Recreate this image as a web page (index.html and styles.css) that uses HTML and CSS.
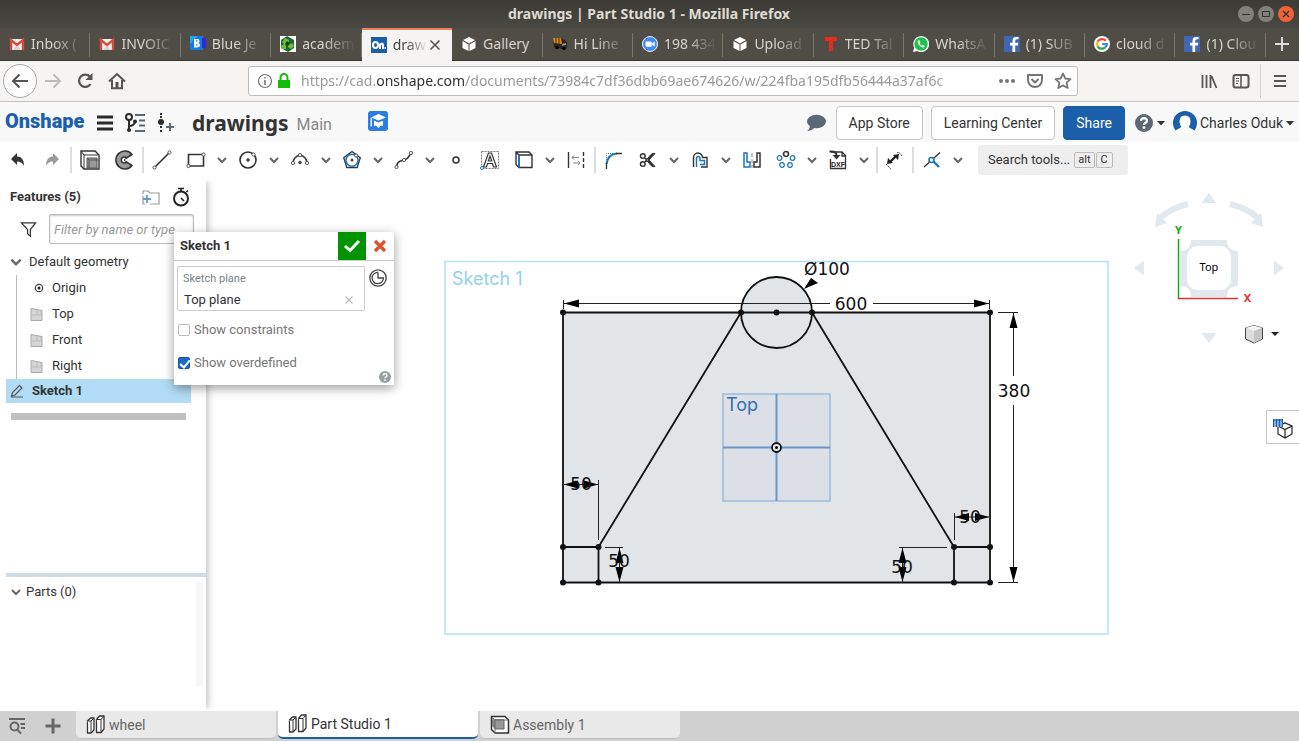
FILE: index.html
```html
<!DOCTYPE html>
<html lang="en">
<head>
<meta charset="utf-8">
<title>drawings | Part Studio 1</title>
<link rel="stylesheet" href="styles.css">
</head>
<body>
<svg class="defs" aria-hidden="true">
  <symbol id="chev" viewBox="0 0 12 12"><path d="M2 4l4 4 4-4" fill="none" stroke="#666" stroke-width="2"/></symbol>
  <symbol id="caret" viewBox="0 0 8 5"><path d="M0 0h8L4 4.5z" fill="#333"/></symbol>
  <symbol id="gmail" viewBox="0 0 16 16"><path d="M1 3h14v11H1z" fill="#eee"/><path d="M4 14l4-5 4 5z" fill="#d5d5d5"/><path d="M2 14V4l6 5 6-5v10" fill="none" stroke="#d54b3d" stroke-width="2.4"/></symbol>
  <symbol id="cube" viewBox="0 0 16 16"><path d="M8 1l6 3-6 3.500L2 4zM1.500 5l6 3.500V15l-6-3zM14.500 5l-6 3.500V15l6-3z" fill="#fff"/></symbol>
  <symbol id="fb" viewBox="0 0 16 16"><path d="M0 0h16v16H0z" fill="#4267b2"/><path d="M14.500 3.300h-1.600q-1.700 0-1.700 1.700v1.800h3.100l-.4 2.600h-2.700V16H8.500V9.400H6V6.800h2.500V4.700Q8.600 1 12.300 1h2.200z" fill="#fff"/></symbol>
  <symbol id="plane" viewBox="0 0 14 14"><path d="M1 1.500l11 2v10H1z" fill="#d5d5d5" stroke="#aaa"/><path d="M7 3v5H2M7 8h4V4" fill="none" stroke="#bbb"/></symbol>
  <symbol id="parts" viewBox="0 0 20 20"><g fill="#fff" stroke="#333" stroke-width="1.300" stroke-linejoin="round"><path d="M1.500 6l3-3H8v12l-3 3H1.500z"/><path d="M1.500 6H5v12M5 6l3-3" stroke-width="1"/><path d="M10.500 4.500l3-3.500H18v13l-3 3.500h-4.500z"/><path d="M10.500 4.500H15v13M15 4.500L18 1" stroke-width="1"/></g></symbol>
  <symbol id="help" viewBox="0 0 18 18"><circle cx="9" cy="9" r="9" fill="currentColor"/><path d="M6 6.800Q6.300 4.200 9 4.200T12 6.800Q12 8.200 10 9.200 9 9.800 9 11" fill="none" stroke="#fff" stroke-width="2.200"/><circle cx="9" cy="13.600" r="1.400" fill="#fff"/></symbol>
</svg>

<header class="titlebar">
  <h1>drawings | Part Studio 1 - Mozilla Firefox</h1>
  <div class="winctl">
    <button aria-label="Minimize"><svg viewBox="0 0 16 16"><path d="M4 8.500h8" stroke="#33322e"/></svg></button>
    <button aria-label="Maximize"><svg viewBox="0 0 16 16"><path d="M4.500 5.500h7v5h-7z" fill="none" stroke="#33322e"/></svg></button>
    <button class="close" aria-label="Close"><svg viewBox="0 0 16 16"><path d="M5 5l6 6M11 5l-6 6" stroke="#33322e" stroke-width="1.300"/></svg></button>
  </div>
</header>

<nav class="browsertabs" aria-label="Browser tabs">
  <button class="btab"><svg><use href="#gmail"/></svg><span>Inbox (</span></button>
  <button class="btab"><svg><use href="#gmail"/></svg><span>INVOIC</span></button>
  <button class="btab"><svg viewBox="0 0 16 16"><path d="M0 0h13v14H0z" fill="#1478e8"/><path d="M0 0h8L0 8z" fill="#20a8ef"/><path d="M12 2h4v10h-4z" fill="#3029d8"/><path d="M4 3h3.500q2 0 2 2t-1.500 2q2 .2 2 2.200T7.500 11.500H4z" fill="#fff"/><path d="M6 4.800h1.500M6 8.800h1.500" stroke="#1478e8" stroke-width="1.300"/></svg><span>Blue Je</span></button>
  <button class="btab"><svg viewBox="0 0 16 16"><path d="M0 0h16v16H0z" fill="#fff"/><path d="M7 0l7 4v8l-6 4-7-4V4z" fill="#186a32"/><path d="M5 2l4 2v3L5 9 2 6zM1 10l3-2 2 2v3H2zM8 9l4-2 2 3-3 3-3-2z" fill="#75ba32"/><path d="M7 5l3 2-2 3-3-2z" fill="#0a451f"/></svg><span>academ</span></button>
  <button class="btab active"><svg viewBox="0 0 16 16"><path d="M0 0h16v16H0z" fill="#1b5faa"/><g fill="none" stroke="#fff" stroke-width="2"><ellipse cx="4.500" cy="8" rx="2.500" ry="3"/><path d="M9 12V6.500M9 8q3-3 3 .5V12"/></g><path d="M13.500 10H15v2h-1.500z" fill="#fff"/></svg><span>draw</span><svg class="x" viewBox="0 0 12 12"><path d="M1.500 1.500l9 9M10.500 1.500l-9 9" stroke="#555" stroke-width="1.600"/></svg></button>
  <button class="btab full"><svg><use href="#cube"/></svg><span>Gallery</span></button>
  <button class="btab"><svg viewBox="0 0 16 16"><path d="M1 3l9-1 5 4v6l-5 1-8-2z" fill="#2a2522"/><path d="M1 2l8 0 1 6-8-1z" fill="#e08a1c"/><path d="M4 2v6M7 2v6" stroke="#4a2c10"/><path d="M10 8l4-1v2l-4 1z" fill="#999"/><circle cx="5" cy="11.500" r="1.800"/><circle cx="12" cy="12.500" r="1.800"/></svg><span>Hi Line</span></button>
  <button class="btab"><svg viewBox="0 0 16 16"><circle cx="8" cy="8" r="7.500" fill="#4087fc" stroke="#fff"/><path d="M3.500 5.500h5q1.200 0 1.200 1.200v4h-5q-1.200 0-1.200-1.200zM10.200 7.300l2.500-1.700v5l-2.500-1.700z" fill="#fff"/></svg><span>198 434</span></button>
  <button class="btab"><svg><use href="#cube"/></svg><span>Upload</span></button>
  <button class="btab"><svg viewBox="0 0 16 16"><path d="M2 1h12v4H10v10H6V5H2z" fill="#e62b1e"/></svg><span>TED Tal</span></button>
  <button class="btab"><svg viewBox="0 0 16 16"><path d="M0 16l1.200-4.200A8 8 0 1 1 4.300 15z" fill="#fff"/><circle cx="8" cy="8" r="6.700" fill="#1fc14b"/><path d="M5.500 4.300q-1.600 1-.4 3.300 1.500 2.800 4 3.700 2.300.7 2.700-1.300l-1.900-1.100-1 .9Q7.400 9 6.700 7.500l.7-.9-.8-2z" fill="#fff"/></svg><span>WhatsA</span></button>
  <button class="btab"><svg><use href="#fb"/></svg><span>(1) SUB</span></button>
  <button class="btab"><svg viewBox="0 0 16 16"><circle cx="8" cy="8" r="8" fill="#fff"/><g fill="none" stroke-width="2.300"><path d="M11.700 4.700A5 5 0 0 0 3.700 5.500" stroke="#ea4335"/><path d="M3.700 5.500a5 5 0 0 0 0 5" stroke="#fbbc05"/><path d="M3.700 10.500a5 5 0 0 0 7.600.9" stroke="#34a853"/><path d="M11.300 11.400Q13 10 12.900 8.200H8.200" stroke="#4285f4"/></g></svg><span>cloud d</span></button>
  <button class="btab"><svg><use href="#fb"/></svg><span>(1) Clou</span></button>
  <button class="newtab" aria-label="New tab"><svg viewBox="0 0 14 14"><path d="M7 0v14M0 7h14" stroke="#ddd" stroke-width="2"/></svg></button>
</nav>

<div class="navbar">
  <button class="back" aria-label="Back"><svg viewBox="0 0 18 18"><path d="M17 9H2M8.500 2.500L2 9l6.500 6.500" fill="none" stroke="#555" stroke-width="2"/></svg></button>
  <button class="nb" aria-label="Forward"><svg viewBox="0 0 18 18"><path d="M1 9h15M9.500 2.500L16 9l-6.500 6.500" fill="none" stroke="#bbb" stroke-width="2"/></svg></button>
  <button class="nb" aria-label="Reload"><svg viewBox="0 0 18 18"><path d="M14.500 12A6.200 6.200 0 1 1 14 4.800" fill="none" stroke="#555" stroke-width="2.200"/><path d="M16.500 1v7h-7z" fill="#555"/></svg></button>
  <button class="nb" aria-label="Home"><svg viewBox="0 0 18 18"><path d="M1 9.500L9 2l8 7.500M4 8v8.200h10V8" fill="none" stroke="#555" stroke-width="2"/><path d="M7.500 10h3v6h-3z" fill="#555"/></svg></button>
  <div class="urlbar">
    <svg class="i16" viewBox="0 0 16 16"><circle cx="8" cy="8" r="6.500" fill="none" stroke="#777" stroke-width="1.200"/><path d="M8 7v5M8 4v1.600" stroke="#777" stroke-width="1.600"/></svg>
    <svg class="lock" viewBox="0 0 14 16"><path d="M1 7h12v8H1z" fill="#12bc00"/><path d="M3.500 7V4.500a3.500 3.500 0 0 1 7 0V7" fill="none" stroke="#12bc00" stroke-width="2"/></svg>
    <div class="url">https://cad.<b>onshape.com</b>/documents/73984c7df36dbb69ae674626/w/224fba195dfb56444a37af6c</div>
    <button aria-label="Page actions"><svg viewBox="0 0 18 18"><g fill="#777"><circle cx="3" cy="9" r="2"/><circle cx="9" cy="9" r="2"/><circle cx="15" cy="9" r="2"/></g></svg></button>
    <button aria-label="Save to Pocket"><svg viewBox="0 0 18 18"><path d="M2 3h14v5a7 7 0 0 1-14 0zM5.500 7L9 10.500 12.500 7" fill="none" stroke="#777" stroke-width="2" stroke-linejoin="round"/></svg></button>
    <button aria-label="Bookmark"><svg viewBox="0 0 18 18"><path d="M9 1.500l2.300 5 5.200.6-3.900 3.600 1.100 5.300L9 13.400 4.300 16l1.100-5.300L1.500 7.100l5.200-.6z" fill="none" stroke="#777" stroke-width="1.800" stroke-linejoin="round"/></svg></button>
  </div>
  <div class="navright">
    <button aria-label="Library"><svg viewBox="0 0 18 18"><path d="M2.500 3v13M6.500 3v13M10.500 3v13M11.500 4l5 12" stroke="#555" stroke-width="1.800"/></svg></button>
    <button aria-label="Sidebar"><svg viewBox="0 0 18 18"><rect x="1.500" y="3" width="15" height="12.500" rx="2" fill="none" stroke="#555" stroke-width="2"/><path d="M9 3v12" stroke="#555" stroke-width="1.500"/><path d="M4 6.500h3M4 9h3M4 11.500h2" stroke="#555"/></svg></button>
    <button class="menu" aria-label="Menu"><svg viewBox="0 0 18 18"><path d="M3 4h12M3 9h12M3 14h12" stroke="#555" stroke-width="2"/></svg></button>
  </div>
</div>

<header class="apphead">
  <a class="logo" href="#">Onshape</a>
  <button class="ib" aria-label="Main menu"><svg viewBox="0 0 20 20"><path d="M2 4h16M2 10h16M2 16h16" stroke="#2b2b2b" stroke-width="3"/></svg></button>
  <button class="ib branch" aria-label="Versions"><svg viewBox="0 0 20 20"><g fill="none" stroke="#2b2b2b" stroke-width="2"><circle cx="4" cy="4" r="3"/><path d="M4 7v10M4 13q5 0 6-4"/></g><circle cx="4" cy="17" r="2" fill="#2b2b2b"/><circle cx="10" cy="8.500" r="2" fill="#2b2b2b"/><path d="M10 2h10M14 7.500h6M14 12.500h6M10 18h10" stroke="#5c6873" stroke-width="1.800"/></svg></button>
  <button class="ib" aria-label="Create version"><svg viewBox="0 0 20 20"><path d="M6 0v2M6 3v2M6 13v2M6 17v2" stroke="#2b2b2b" stroke-width="2"/><circle cx="6" cy="9" r="3" fill="#2b2b2b"/><path d="M15 10v8M11 14h8" stroke="#5c6873" stroke-width="2"/></svg></button>
  <span class="docname">drawings</span><span class="ws">Main</span>
  <svg class="cap" viewBox="0 0 20 20"><rect width="20" height="20" rx="3" fill="#2a7de1"/><path d="M10.500 3l7.500 3.500-7.500 3L3 6.500z" fill="#fff"/><path d="M6 9.500l4.500 1.500 4.500-1.500v5.500l-2-.5-2.500 2.500L8 14.500l-2 .5z" fill="#fff"/><path d="M6 9l4.500 2L15 9" fill="none" stroke="#2a7de1"/><path d="M3.200 7v8.500" stroke="#fff" stroke-width="1.300"/></svg>
  <div class="headright">
    <svg class="chat" viewBox="0 0 20 18"><ellipse cx="10.500" cy="7.500" rx="9.500" ry="6.700" fill="#5c6873"/><path d="M4 11q0 4-3 6 5 0 8-4z" fill="#5c6873"/></svg>
    <button class="btn">App Store</button>
    <button class="btn">Learning Center</button>
    <button class="btn primary">Share</button>
    <button class="drop" aria-label="Help"><svg class="hq"><use href="#help"/></svg><svg class="car"><use href="#caret"/></svg></button>
    <button class="drop user"><svg class="av" viewBox="0 0 24 24"><circle cx="12" cy="12" r="12" fill="#1b5faa"/><path d="M12 4.500q5.500 0 5.500 6 0 3.500-2 5.500l6 3.500L19 24H5l-2.500-4.500 6-3.500q-2-2-2-5.500 0-6 5.500-6z" fill="#fff"/></svg><span>Charles Oduk</span><svg class="car"><use href="#caret"/></svg></button>
  </div>
</header>

<div class="toolbar" role="toolbar" aria-label="Sketch tools">
  <button class="tool" aria-label="Undo"><svg viewBox="0 0 20 20"><path d="M9 3v3.500q7 0 7 9.500-2-4.500-7-4.500V15L3 9z" fill="#333"/></svg></button>
  <button class="tool" aria-label="Redo"><svg viewBox="0 0 20 20"><path d="M11 3v3.500q-7 0-7 9.500 2-4.500 7-4.500V15l6-6z" fill="#999"/></svg></button>
  <i class="sep"></i>
  <button class="tool" aria-label="Extrude"><svg viewBox="0 0 20 20"><path d="M1 1h14l4 4v14H4l-3-3z" fill="#fff" stroke="#333" stroke-width="1.400"/><path d="M4 19V5h14M1 1l3 4" fill="none" stroke="#333"/><path d="M7 8h10v10H7z" fill="#999" stroke="#555"/><path d="M7 8l2 2v8M9 10h9" fill="none" stroke="#555"/></svg></button>
  <button class="tool" aria-label="Revolve"><svg viewBox="0 0 20 20"><path d="M18 4.500A9 9 0 1 0 18 15.500L12.500 12a3 3 0 1 1 0-4z" fill="#999" stroke="#333" stroke-width="1.500"/><path d="M17 4.500L10 10l7 5.500" fill="none" stroke="#333"/></svg></button>
  <i class="sep"></i>
  <button class="tool" aria-label="Line"><svg viewBox="0 0 20 20"><path d="M3 17L17 3" stroke="#333" stroke-width="1.600"/><g fill="#fff" stroke="#555"><circle cx="2.500" cy="17.500" r="1.600"/><circle cx="17.500" cy="2.500" r="1.600"/></g></svg></button>
  <button class="tool" aria-label="Rectangle"><svg viewBox="0 0 20 20"><path d="M2.500 4.500h15v11.500h-15z" fill="none" stroke="#333" stroke-width="1.600"/><g fill="#fff" stroke="#555"><circle cx="2.500" cy="16" r="1.600"/><circle cx="17.500" cy="4.500" r="1.600"/></g></svg></button>
  <button class="more" aria-label="More rectangles"><svg><use href="#chev"/></svg></button>
  <button class="tool" aria-label="Circle"><svg viewBox="0 0 20 20"><circle cx="10" cy="10" r="8" fill="none" stroke="#333" stroke-width="1.600"/><circle cx="10" cy="10" r="1.700" fill="#333"/><circle cx="15.500" cy="4.500" r="1.600" fill="#fff" stroke="#555"/></svg></button>
  <button class="more" aria-label="More circles"><svg><use href="#chev"/></svg></button>
  <button class="tool" aria-label="Arc"><svg viewBox="0 0 20 20"><path d="M3 13a7 7.500 0 0 1 14 0" fill="none" stroke="#333" stroke-width="1.500"/><circle cx="10" cy="12.500" r="1.700" fill="#444"/><g fill="#fff" stroke="#555"><circle cx="3" cy="13" r="1.600"/><circle cx="10" cy="5" r="1.600"/><circle cx="17" cy="13" r="1.600"/></g></svg></button>
  <button class="more" aria-label="More arcs"><svg><use href="#chev"/></svg></button>
  <button class="tool" aria-label="Polygon"><svg viewBox="0 0 20 20"><path d="M10 1.500l8.300 6.300-3.100 9.700H4.800L1.700 7.800z" fill="none" stroke="#333" stroke-width="1.300"/><circle cx="10" cy="10.300" r="6" fill="none" stroke="#1b75bc" stroke-width="1.500"/><circle cx="10" cy="10" r="1.500" fill="#444"/><circle cx="14" cy="5.500" r="1.600" fill="#fff" stroke="#555"/></svg></button>
  <button class="more" aria-label="More polygons"><svg><use href="#chev"/></svg></button>
  <button class="tool" aria-label="Spline"><svg viewBox="0 0 20 20"><path d="M2.500 17Q3 11 8.500 10.500T16.500 3" fill="none" stroke="#333" stroke-width="1.600"/><g fill="#fff" stroke="#555"><circle cx="2.500" cy="17" r="1.600"/><circle cx="10" cy="10" r="1.600"/><circle cx="17" cy="3" r="1.600"/></g></svg></button>
  <button class="more" aria-label="More splines"><svg><use href="#chev"/></svg></button>
  <button class="tool" aria-label="Point"><svg viewBox="0 0 20 20"><circle cx="10" cy="10" r="3" fill="none" stroke="#333" stroke-width="1.500"/></svg></button>
  <button class="tool" aria-label="Text"><svg viewBox="0 0 20 20"><path d="M1.500 1.500h17v17h-17z" fill="none" stroke="#777" stroke-dasharray="2 1"/><path d="M3.500 17L8.500 3h3l5 14h-3l-1-3.500h-5l-1 3.500zM8.300 11h3.400L10 6z" fill="#fff" stroke="#333" stroke-width="1.200"/><circle cx="2" cy="18" r="1.500" fill="#fff" stroke="#1b75bc"/></svg></button>
  <button class="tool" aria-label="Use"><svg viewBox="0 0 20 20"><path d="M2 2h13l3 3v12.500H5L2 14.500zM2 2l3 3h13M5 5v12" fill="none" stroke="#333" stroke-width="1.400"/><path d="M5 5v12.500" stroke="#1b75bc" stroke-width="1.600"/></svg></button>
  <button class="more" aria-label="More use tools"><svg><use href="#chev"/></svg></button>
  <button class="tool" aria-label="Construction"><svg viewBox="0 0 20 20"><path d="M2.500 2v16" stroke="#333" stroke-width="1.400"/><path d="M17.500 2v16" stroke="#333" stroke-width="1.400" stroke-dasharray="4 2"/><path d="M6 7.500h7M8 5.500l-2 2 2 2M7 13h7M12 11l2 2-2 2" fill="none" stroke="#888"/></svg></button>
  <i class="sep"></i>
  <button class="tool" aria-label="Fillet"><svg viewBox="0 0 20 20"><path d="M2.500 12V3.500h8" fill="none" stroke="#777" stroke-dasharray="1 1"/><path d="M2.500 14Q4 4 13 3.500" fill="none" stroke="#1b75bc" stroke-width="2"/><path d="M12 3.500h6M2.500 13v6" stroke="#333" stroke-width="1.300"/></svg></button>
  <button class="tool" aria-label="Trim"><svg viewBox="0 0 20 20"><path d="M7 11.500L13 4.500q2-2 4-1L10 11zM7 8.500l6 7q2 2 4 1L10 9z" fill="#333" stroke="#333"/><g fill="none" stroke="#333" stroke-width="1.500"><circle cx="4.800" cy="6" r="2.300"/><circle cx="4.800" cy="14" r="2.300"/></g></svg></button>
  <button class="more" aria-label="More trim tools"><svg><use href="#chev"/></svg></button>
  <button class="tool" aria-label="Offset"><svg viewBox="0 0 20 20"><path d="M3.500 17V7.500a4.500 4.500 0 0 1 9 0H17V17h-6" fill="none" stroke="#333" stroke-width="1.400"/><path d="M6.500 17V8a1.800 1.800 0 0 1 3.500 0v2.500h4.500v4H10" fill="none" stroke="#1b75bc" stroke-width="1.500"/></svg></button>
  <button class="more" aria-label="More offset tools"><svg><use href="#chev"/></svg></button>
  <button class="tool" aria-label="Mirror"><svg viewBox="0 0 20 20"><path d="M2 3h3v9h3v5H2z" fill="none" stroke="#1b75bc" stroke-width="1.500"/><path d="M18 3h-3v9h-3v5h6z" fill="none" stroke="#333" stroke-width="1.500"/><path d="M10 3v15" stroke="#888" stroke-dasharray="4 2"/></svg></button>
  <button class="tool" aria-label="Pattern"><svg viewBox="0 0 20 20"><circle cx="10" cy="4" r="2.500" fill="none" stroke="#333" stroke-width="1.700"/><g fill="none" stroke="#1b75bc" stroke-width="1.200"><circle cx="3.500" cy="8" r="2.300"/><circle cx="16.500" cy="8" r="2.300"/><circle cx="6" cy="15" r="2.300"/><circle cx="14" cy="15" r="2.300"/></g></svg></button>
  <button class="more" aria-label="More patterns"><svg><use href="#chev"/></svg></button>
  <button class="tool" aria-label="Insert DXF"><svg viewBox="0 0 20 20"><path d="M3 2H14l3.500 3.500V18.500H2.500V9M14 2v4h4" fill="none" stroke="#333" stroke-width="1.300"/><path d="M1.500 1.500h2q5 0 5 4" fill="none" stroke="#333" stroke-width="2"/><path d="M4.500 5h8l-4 4.500z" fill="#333"/><text x="10" y="17" class="dxf">DXF</text></svg></button>
  <button class="more" aria-label="More insert tools"><svg><use href="#chev"/></svg></button>
  <i class="sep wide"></i>
  <button class="tool dim" aria-label="Dimension"><svg viewBox="0 0 20 20"><path d="M5 12l6-6" stroke="#222" stroke-width="2.400"/><path d="M2 14l1-6 5 5zM14 4l-6 1 5 5z" fill="#222"/><path d="M1 14l5 5M12 3q2-2 5 3" fill="none" stroke="#222" stroke-dasharray="1.500 1"/></svg></button>
  <i class="sep"></i>
  <button class="tool" aria-label="Constraint"><svg viewBox="0 0 20 20"><path d="M2 17L18 2.500" stroke="#333" stroke-width="1.300"/><path d="M11 11l6 6" stroke="#1b75bc" stroke-width="2.400"/><circle cx="9.500" cy="10" r="2.500" fill="#fff" stroke="#1b75bc" stroke-width="1.600"/></svg></button>
  <button class="more" aria-label="More constraints"><svg><use href="#chev"/></svg></button>
  <button class="search">Search tools... <kbd>alt</kbd><kbd>C</kbd></button>
</div>

<main class="work">
  <aside class="side">
    <section class="features">
      <div class="sidehead"><h2>Features (5)</h2>
        <button aria-label="Add folder"><svg viewBox="0 0 20 20"><path d="M2 7V4h5l2 2h9v11H9M2 9v8h2" fill="none" stroke="#999" stroke-width="1.200"/><path d="M6 8v8M2 12h8" stroke="#5b9fd0" stroke-width="1.800"/></svg></button>
        <button aria-label="Regeneration times"><svg viewBox="0 0 20 20"><circle cx="10" cy="11.500" r="7" fill="none" stroke="#222" stroke-width="2"/><path d="M10 4V1.500M7 1.500h6M15.500 5l1.500-1.500M10 11l3 3" stroke="#222" stroke-width="1.700"/></svg></button>
      </div>
      <div class="filter"><svg viewBox="0 0 18 18"><path d="M1.500 2h15L11 9v7l-3-2.500V9z" fill="none" stroke="#333" stroke-width="1.300"/></svg>
        <input type="text" placeholder="Filter by name or type" aria-label="Filter by name or type"></div>
      <div class="row group"><svg class="i12"><use href="#chev"/></svg>Default geometry</div>
      <ul>
        <li class="row"><svg viewBox="0 0 14 14"><circle cx="9" cy="7" r="3.700" fill="none" stroke="#444" stroke-width="1.200"/><circle cx="9" cy="7" r="1.500" fill="#222"/></svg>Origin</li>
        <li class="row"><svg><use href="#plane"/></svg>Top</li>
        <li class="row"><svg><use href="#plane"/></svg>Front</li>
        <li class="row"><svg><use href="#plane"/></svg>Right</li>
      </ul>
      <div class="row selected"><svg viewBox="0 0 14 14"><path d="M1.500 12l1-3.500 7-7 2.500 2.500-7 7zM1 13h12" fill="none" stroke="#555" stroke-width="1.200"/></svg>Sketch 1</div>
      <div class="rollback"></div>
    </section>
    <section class="partlist"><div class="phead"><svg class="i12"><use href="#chev"/></svg>Parts (0)</div><div class="strip"></div></section>
  </aside>

  <section class="canvas">
    <svg class="drawing" viewBox="206 180 1093 531" role="img" aria-label="Sketch">
      <rect x="445" y="261.500" width="663" height="372.500" fill="none" stroke="#b5e0f4" stroke-width="1.500"/>
      <path d="M563 312.500h427v270H563z" fill="#e1e5e8"/>
      <circle cx="776.500" cy="312.500" r="35.500" fill="#e1e5e8"/>
      <g fill="#dcdfe6" stroke="#9dbbdc" stroke-width="1.500"><path d="M723 394h107v107H723z"/><path d="M776.500 394v107M723 447.500h107" stroke="#6897cc" stroke-width="2"/></g>
      <g fill="none" stroke="#111" stroke-width="1.800"><path d="M563 312.500h427v270H563zM563 547h35.500v35.500M990 547h-36v35.500M741 312.500L598.500 547M812 312.500L954 547"/><circle cx="776.500" cy="312.500" r="35.500"/></g>
      <g fill="#111"><circle cx="563" cy="312.500" r="3"/><circle cx="741" cy="312.500" r="3"/><circle cx="776.500" cy="312.500" r="3"/><circle cx="812" cy="312.500" r="3"/><circle cx="990" cy="312.500" r="3"/><circle cx="563" cy="547" r="3"/><circle cx="598.500" cy="547" r="3"/><circle cx="954" cy="547" r="3"/><circle cx="990" cy="547" r="3"/><circle cx="563" cy="582.500" r="3"/><circle cx="598.500" cy="582.500" r="3"/><circle cx="954" cy="582.500" r="3"/><circle cx="990" cy="582.500" r="3"/></g>
      <g fill="none" stroke="#222"><path d="M563.500 300v9M989.500 300v9M563 303.500h267M873 303.500h117M998 312.500h20M998 582.500h20M1013.500 313v63M1013.500 405v177M598.500 480v60M563 484.500h36M954.500 513v27M954 517h36M605 547.500h18M619.500 547v35M899 547.500h48M902.500 547v35"/></g>
      <g fill="#000"><path d="M564 303.500l15-4v8zM989 303.500l-15-4v8zM1013.500 313l-4 15h8zM1013.500 582l-4-15h8zM564 484.500l14-4v8zM598 484.500l-14-4v8zM955 517l14-4v8zM989 517l-14-4v8zM619.500 548l-4 15h8zM619.500 582l-4-15h8zM902.500 548l-4 15h8zM902.500 582l-4-15h8zM804 289l7-11 7 5z"/></g>
      <g class="dims"><text x="827" y="275">Ø100</text><text x="851" y="310">600</text><text x="1014" y="397">380</text><text x="581" y="490">50</text><text x="970" y="523">50</text><text x="619" y="567">50</text><text x="902" y="573">50</text></g>
      <circle cx="776.500" cy="447.500" r="4.500" fill="#e8ebee" stroke="#111" stroke-width="1.800"/><circle cx="776.500" cy="447.500" r="1.500"/>
      <text x="452" y="285" class="pl">Sketch 1</text><text x="726" y="411" class="pt">Top</text>
    </svg>
    <svg class="viewcube" viewBox="1130 190 160 160" role="img" aria-label="View cube">
      <g fill="#e1e8ee"><path d="M1201.500 203h15l-7.500-10zM1201.500 333h15l-7.500 10zM1144 260.500v15l-10-7.500zM1274 260.500v15l10-7.500z"/><path d="M1191 240h36q0 11 11 11v35q-11 0-11 11h-36q0-11-11-11v-35q11 0 11-11z"/><path d="M1155 227l2-14 10 10zM1263 227l-2-14-10 10z"/></g>
      <path d="M1160 218Q1171 208 1188 204M1258 218Q1247 208 1230 204" fill="none" stroke="#e1e8ee" stroke-width="6"/>
      <rect x="1187" y="246" width="44" height="44" rx="11" fill="#fff"/>
      <path d="M1178.500 239v59.500" stroke="#18a51c" stroke-width="1.500"/><path d="M1178 298.500h60" stroke="#e03030" stroke-width="1.500"/>
      <text x="1209" y="271" class="vc">Top</text><text x="1178.500" y="234" class="vc ay">Y</text><text x="1247.500" y="302" class="vc ax">X</text>
      <path d="M1245.500 328l8.500-2.500 8.500 2.500v11l-8.500 4-8.500-4z" fill="#ddd" stroke="#444"/><path d="M1245.500 328l8.500 3 8.500-3-8.500-2.500z" fill="#f3f3f3"/><path d="M1254 331l8-3v11l-8 4z" fill="#c5c5c5"/>
      <path d="M1271 332h8l-4 4z" fill="#222"/>
    </svg>
    <button class="config" aria-label="Configurations"><svg viewBox="0 0 24 24"><path d="M7 11l7-3 7 3v8l-7 4-7-4zM7 11l7 3.500 7-3.500M14 14.500V23" fill="#fff" stroke="#222" stroke-width="1.200"/><path d="M2 4h10v8H2z" fill="#7eaee0"/><path d="M2 5h10M2.500 4v8M5.500 4v8M8.500 4v8M11.500 4v8" stroke="#1b5faa"/></svg></button>
  </section>

  <form class="dialog" aria-label="Sketch 1">
    <div class="dhead"><h2>Sketch 1</h2>
      <button type="button" class="ok" aria-label="Accept"><svg viewBox="0 0 18 18"><path d="M2 9l5 4.500L16 4" fill="none" stroke="#fff" stroke-width="3"/></svg></button>
      <button type="button" class="no" aria-label="Cancel"><svg viewBox="0 0 14 14"><path d="M2 2l10 10M12 2L2 12" stroke="#e0502a" stroke-width="3.200"/></svg></button></div>
    <div class="dbody">
      <div class="plane"><label for="pl">Sketch plane</label><div><input id="pl" type="text" value="Top plane"><button type="button" aria-label="Clear"><svg viewBox="0 0 10 10"><path d="M1.500 1.500l7 7M8.500 1.500l-7 7" stroke="#bbb" stroke-width="1.200"/></svg></button></div></div>
      <svg class="clock" viewBox="0 0 18 18"><g fill="none" stroke="#444" stroke-width="1.300"><circle cx="9" cy="9" r="8.200"/><path d="M9 3.500V9h5.500A5.700 5.700 0 1 1 9 3.300"/></g></svg>
    </div>
    <label class="check"><input type="checkbox">Show constraints</label>
    <label class="check"><input type="checkbox" checked>Show overdefined</label>
    <svg class="dhelp"><use href="#help"/></svg>
  </form>
</main>

<footer class="doctabs">
  <button class="fb1" aria-label="Tab manager"><svg viewBox="0 0 18 18"><g fill="none" stroke="#666" stroke-width="2"><path d="M1 2h16M12.500 7h4.500M13 11h4"/><circle cx="6.500" cy="9.500" r="4"/><path d="M9 12.500l4 4"/></g></svg></button>
  <button class="fb2" aria-label="Add tab"><svg viewBox="0 0 18 18"><path d="M9 1.500v15M1.500 9h15" stroke="#666" stroke-width="3"/></svg></button>
  <button class="dtab"><svg><use href="#parts"/></svg>wheel</button>
  <button class="dtab active"><svg><use href="#parts"/></svg>Part Studio 1</button>
  <button class="dtab"><svg viewBox="0 0 20 20"><path d="M1.500 1.500H15L18.500 5v13H5l-3.500-3.500z" fill="#fff" stroke="#333" stroke-width="1.500"/><path d="M2 2l3 3v13M5 5h13" fill="none" stroke="#777"/><path d="M2 2l2 2h10v10H5l-3-3z" fill="#888"/><path d="M5 5h9v9H5z" fill="#999" stroke="#666"/></svg>Assembly 1</button>
</footer>
</body>
</html>
```
FILE: styles.css
```css
* { box-sizing: border-box; }
body { margin: 0; min-height: 100vh; display: flex; flex-direction: column; font: 14px/20px Roboto, "Liberation Sans", sans-serif; color: #333; background: #fff; }
button { font: inherit; color: inherit; background: none; border: 0; padding: 0; display: flex; align-items: center; justify-content: center; flex: none; }
svg { display: block; flex: none; width: 16px; height: 16px; }
h1, h2, ul { margin: 0; padding: 0; list-style: none; }
.defs { position: absolute; width: 0; height: 0; }

.titlebar { display: flex; align-items: center; height: 28px; background: linear-gradient(#3b3a36, #4a4842); }
.titlebar h1 { flex: 1; text-align: center; font: bold 14px/20px "Noto Sans", sans-serif; color: #dfdbd2; padding-left: 60px; }
.winctl { display: flex; gap: 4px; padding-right: 5px; }
.winctl button { width: 16px; height: 16px; border-radius: 50%; background: #82807a; }
.winctl .close { background: #ee6234; }

.browsertabs { display: flex; height: 33px; background: #504d46; border-bottom: 1px solid #35342f; }
.btab { flex: 1 1 0; min-width: 0; justify-content: flex-start; gap: 6px; padding: 0 4px 0 9px; color: #d9d5cc; font: 14px/20px "Noto Sans", sans-serif; position: relative; }
.btab:not(.active)::after { content: ""; position: absolute; right: 0; top: 5px; bottom: 3px; width: 1px; background: #7a776f; }
.btab span { flex: 1; text-align: left; white-space: nowrap; -webkit-mask-image: linear-gradient(90deg, #000 40%, transparent 95%); mask-image: linear-gradient(90deg, #000 40%, transparent 95%); }
.btab.full span { -webkit-mask-image: none; mask-image: none; }
.btab.active { background: #f5f4f2; color: #444; border-top: 2px solid #f0805a; margin-bottom: -1px; padding-bottom: 2px; }
.btab .x { width: 12px; height: 12px; margin: 0 7px 0 -6px; }
.newtab { width: 33px; }
.newtab svg { width: 14px; height: 14px; }

.navbar { display: flex; align-items: center; height: 41px; padding-left: 3px; background: #f5f4f2; border-bottom: 1px solid #c4c2be; }
.navbar svg { width: 18px; height: 18px; }
.back { width: 34px; height: 34px; border: 1px solid #aaa; border-radius: 50%; background: #fcfcfc; }
.nb { width: 32px; height: 32px; }
.urlbar { flex: 1; display: flex; align-items: center; height: 30px; margin-left: 115px; padding: 0 5px 0 8px; background: #fff; border: 1px solid #bbb; border-radius: 3px; gap: 10px; min-width: 0; }
.urlbar .i16 { width: 16px; height: 16px; }
.urlbar .lock { width: 14px; height: 16px; margin-left: -6px; }
.url { flex: 1; min-width: 0; overflow: hidden; white-space: nowrap; font: 14px/20px "Noto Sans", sans-serif; color: #999; margin-right: 25px; -webkit-mask-image: linear-gradient(90deg, #000 96%, transparent); mask-image: linear-gradient(90deg, #000 96%, transparent); }
.url b { font-weight: normal; color: #333; }
.navright { display: flex; align-items: center; gap: 14px; margin-left: 122px; padding-right: 10px; }
.navright .menu { border-left: 1px solid #d5d3cf; height: 34px; padding-left: 10px; margin-left: -4px; }

.apphead { display: flex; align-items: center; height: 40px; background: #f8f8f8; padding: 2px 0 0 5px; }
.logo { font: 900 20px/24px Roboto, sans-serif; color: #1b5faa; text-decoration: none; width: 90px; margin-bottom: 4px; }
.ib { width: 20px; margin-right: 10px; }
.ib svg { width: 20px; height: 20px; }
.docname { font: bold 21px/28px "Noto Sans", sans-serif; margin-left: 7px; }
.ws { font-size: 16px; color: #888; margin: 3px 0 0 8px; }
.cap { width: 20px; height: 20px; margin: 0 0 4px 36px; }
.headright { display: flex; align-items: center; margin-left: auto; padding-right: 5px; gap: 8px; }
.chat { width: 20px; height: 18px; margin-right: 2px; }
.btn { height: 34px; padding: 0 12px; border: 1px solid #c6c6c6; border-radius: 4px; background: #fff; }
.primary { background: #1b5faa; border-color: #1b5faa; color: #fff; }
.drop { gap: 3px; margin-left: 2px; }
.drop .hq { width: 18px; height: 18px; color: #5c6873; margin-right: 1px; }
.drop .car { width: 8px; height: 5px; }
.drop .av { width: 24px; height: 24px; }
.user { margin-left: 0; }

.toolbar { display: flex; align-items: center; height: 38px; padding: 0 0 2px 1px; background: #fff; }
.tool { width: 34px; height: 30px; }
.tool svg { width: 20px; height: 20px; }
.dim { width: 32px; }
.more { width: 18px; height: 30px; }
.more svg, .i12 { width: 12px; height: 12px; }
.sep { width: 2px; height: 26px; margin: 0 1px; background: #ddd; flex: none; }
.sep.wide { margin-left: 3px; }
.dxf { font: bold 7px "Liberation Sans", sans-serif; text-anchor: middle; fill: #222; }
.search { height: 30px; margin-left: 11px; padding: 0 15px 0 10px; background: #eee; border-radius: 3px; font-size: 13px; }
kbd { font: 11px/14px Roboto, sans-serif; border: 1px solid #bbb; border-radius: 2px; padding: 0 3px; margin-left: 1px; }
.search kbd:first-of-type { margin-left: 4px; }
.search kbd:last-of-type { padding: 0 4px; }

.work { flex: 1; display: flex; position: relative; min-height: 531px; font-size: 13px; }
.side { flex: none; width: 206px; margin: 1px 0 2px; display: flex; flex-direction: column; background: #fff; box-shadow: 1px 0 8px rgba(0,0,0,.3); clip-path: inset(0 -12px 0 0); }
.features { flex: 1; display: flex; flex-direction: column; }
.sidehead { display: flex; align-items: center; gap: 10px; padding: 6px 15px 0 10px; }
.sidehead h2 { flex: 1; font-size: 13px; font-weight: bold; }
.sidehead svg { width: 20px; height: 20px; }
.filter { display: flex; align-items: center; gap: 12px; padding: 7px 12px 0 20px; margin-bottom: 5px; }
.filter svg { width: 17px; height: 17px; }
.filter input { flex: 1; min-width: 0; height: 30px; border: 1px solid #bbb; border-radius: 2px; box-shadow: inset 0 1px 2px #ccc; font: italic 13px/20px Roboto, sans-serif; padding: 0 4px; }
.filter input::placeholder { color: #999; }
.row { display: flex; align-items: center; height: 26px; gap: 8px; }
.row svg { width: 14px; height: 14px; }
.group { padding-left: 9px; gap: 6px; }
.features ul { margin-left: 16px; border-left: 1px solid #bbb; padding-left: 13px; }
.selected { height: 24px; margin: 0 15px 0 6px; padding-left: 4px; background: #b0dcf5; font-weight: bold; font-size: 13px; }
.rollback { height: 7px; margin: 10px 20px 0 11px; background: #c0c0c0; }
.partlist { display: flex; justify-content: space-between; height: 136px; margin-left: 6px; padding: 5px 3px 0 4px; border-top: 4px solid #d0dce5; }
.phead { display: flex; align-items: center; gap: 4px; height: 20px; }
.strip { width: 7px; height: 104px; background: #f7f7f7; }

.canvas { flex: 1; min-width: 0; position: relative; }
.drawing { position: absolute; inset: 0; width: 100%; height: 100%; }
.dims { font: 17px "DejaVu Sans", sans-serif; text-anchor: middle; fill: #111; }
.pl, .pt { font: 18px Inter, sans-serif; fill: #91d1f0; }
.pt { fill: #3570b5; }
.viewcube { position: absolute; right: 9px; top: 10px; width: 160px; height: 160px; }
.vc { font: 11px "Noto Sans", sans-serif; text-anchor: middle; fill: #000; }
.ay { fill: #18a51c; font-weight: bold; }
.ax { fill: #e03030; font-weight: bold; }
.config { position: absolute; right: 0; top: 230px; width: 33px; height: 34px; border: 1px solid #c5c5c5; border-right: 0; background: #fff; }
.config svg { width: 24px; height: 24px; }

.dialog { position: absolute; left: 174px; top: 52px; width: 220px; height: 153px; background: #fff; box-shadow: 0 3px 10px rgba(0,0,0,.4); }
.dhead { display: flex; align-items: center; height: 29px; border-bottom: 1px solid #ccc; padding-left: 6px; }
.dhead h2 { flex: 1; font-size: 13px; }
.ok, .no { width: 28px; height: 28px; }
.ok { background: #009500; }
.ok svg { width: 18px; height: 18px; }
.no svg { width: 14px; height: 14px; }
.dbody { display: flex; gap: 4px; padding: 5px 7px 0 3px; }
.plane { flex: 1; min-width: 0; height: 45px; padding: 4px 10px 0 5px; border: 1px solid #ccc; border-radius: 2px; }
.plane label { display: block; font: 11px/15px Roboto, sans-serif; color: #777f87; }
.plane div { display: flex; align-items: center; justify-content: space-between; margin-top: 4px; }
.plane input { flex: 1; min-width: 0; border: 0; padding: 0 1px; font: inherit; color: inherit; height: 20px; }
.plane svg { width: 10px; height: 10px; }
.clock { width: 18px; height: 18px; margin-top: 3px; }
.check { display: flex; align-items: center; gap: 4px; height: 20px; margin: 9px 0 13px 4px; color: #777; }
.check + .check { margin: 0 0 0 4px; }
.check input { appearance: none; width: 12px; height: 12px; margin: 0; border: 1px solid #bbb; border-radius: 2px; background: #fff; position: relative; }
.check input:checked { background: #1b6ac9; border-color: #17549c; }
.check input:checked::after { content: ""; position: absolute; left: 3px; top: 0; width: 4px; height: 8px; border: solid #fff; border-width: 0 2px 2px 0; transform: rotate(40deg); }
.dhelp { position: absolute; right: 3px; bottom: 2px; width: 12px; height: 12px; color: #999fa5; }

.doctabs { display: flex; height: 30px; background: #d0d0d0; color: #666; }
.doctabs svg { width: 18px; height: 18px; }
.fb1 { width: 34px; height: 30px; }
.fb2 { width: 38px; height: 30px; margin-right: 4px; }
.dtab { flex: 0 1 200px; height: 28px; margin-right: 2px; padding-left: 10px; gap: 3px; justify-content: flex-start; background: #e9e9e9; border-radius: 0 0 5px 5px; border-bottom: 1px solid #bbb; }
.doctabs .dtab svg { width: 20px; height: 20px; }
.dtab.active { background: #fff; color: #333; border-bottom: 2px solid #1b5faa; }
```
